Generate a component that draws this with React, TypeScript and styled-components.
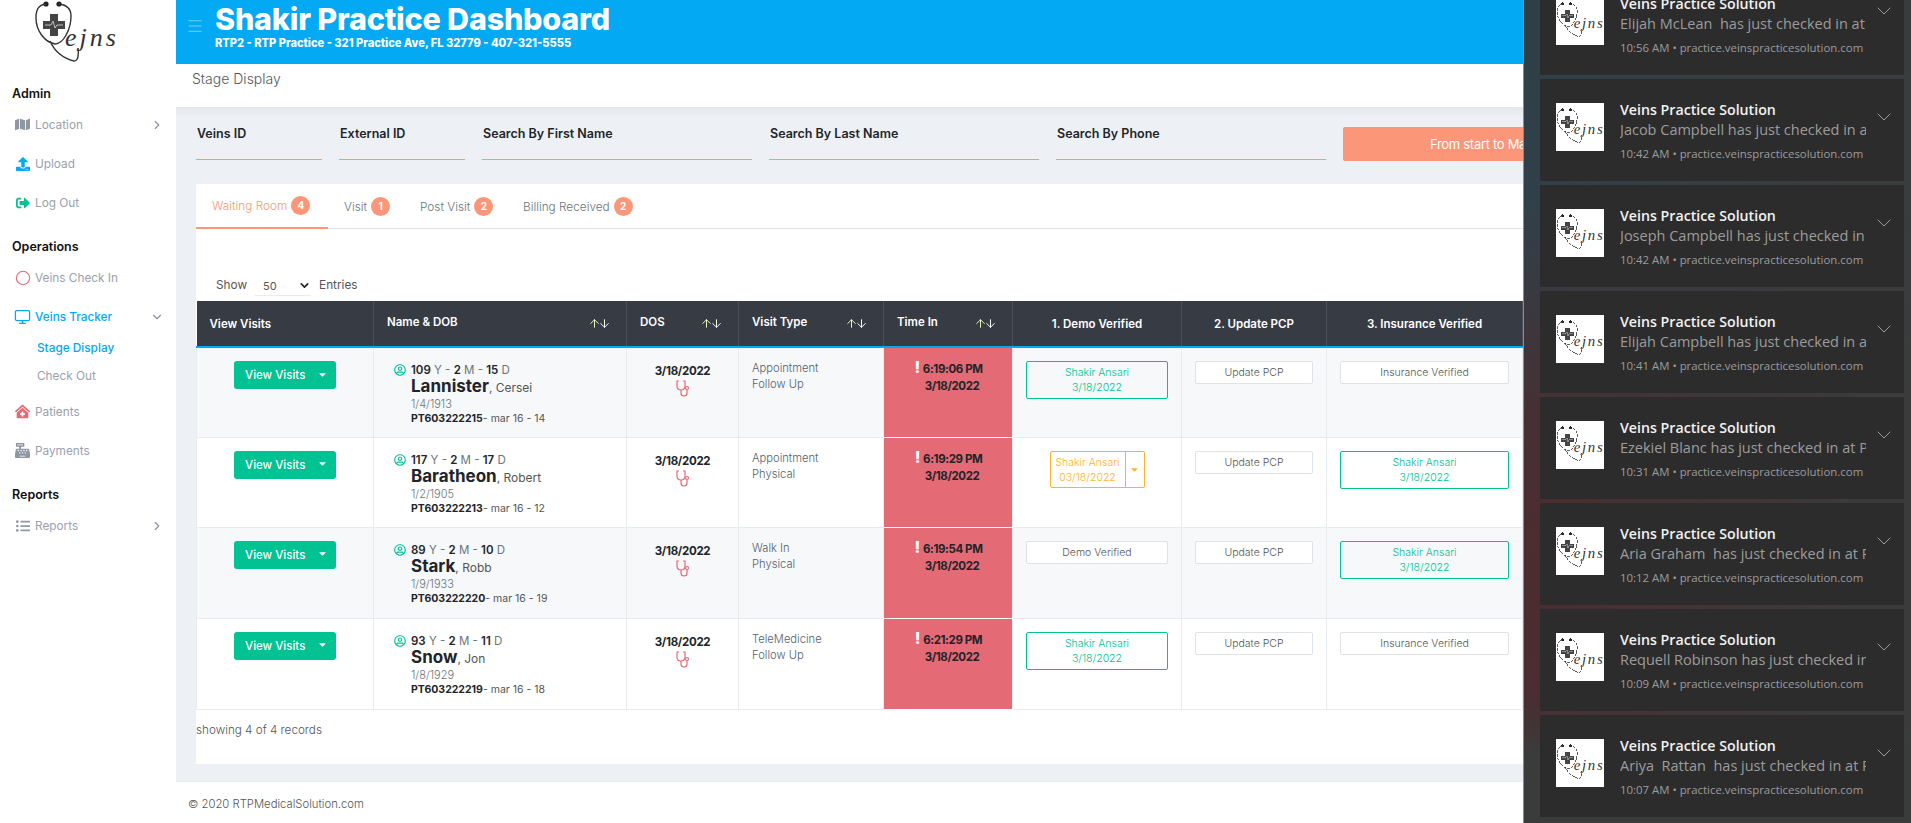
import React from "react";
import styled, { createGlobalStyle } from "styled-components";
import { ChevronDown, ChevronRight, Circle, Monitor, ArrowUp, ArrowDown, Menu } from "lucide-react";
import { FaMap, FaUpload, FaSignOutAlt, FaClinicMedical, FaCashRegister, FaListUl, FaCaretDown, FaRegUserCircle } from "react-icons/fa";

const Global = createGlobalStyle`
  html, body { margin: 0; padding: 0; height: 100%; overflow: hidden; background: #fff; }
  * { box-sizing: border-box; }
  body { font-family: Inter, "Open Sans", "Liberation Sans", sans-serif; color: #67757c; }
`;

const Page = styled.div`
  position: relative;
  display: flex;
  width: 1911px;
  height: 823px;
  overflow: hidden;
`;

/* ---------- sidebar ---------- */
const Sidebar = styled.aside`
  width: 176px;
  flex: none;
  background: #fff;
  padding-left: 12px;
`;
const LogoBlock = styled.div`
  height: 69px;
  margin-left: -12px;
`;
const SectionTitle = styled.div`
  height: 21px;
  margin: 14px 0 1px;
  line-height: 21px;
  font-size: 12.5px;
  font-weight: 600;
  color: #111;
`;
const MenuRow = styled.div<{ $active?: boolean }>`
  display: flex;
  align-items: center;
  height: 39px;
  padding-right: 12px;
  font-size: 11.8px;
  color: ${(p) => (p.$active ? "#03a9f3" : "#99a1ad")};
  font-weight: ${(p) => (p.$active ? 500 : 400)};
`;
const MenuIcon = styled.span<{ $color: string }>`
  display: flex;
  align-items: center;
  justify-content: center;
  width: 17px;
  margin: 0 4px 0 2px;
  color: ${(p) => p.$color};
`;
const MenuLabel = styled.span`
  flex: 1;
`;
const Caret = styled.span`
  display: flex;
  color: #8a919c;
`;
const SubList = styled.div`
  margin: -2px 0 2px;
`;
const SubItem = styled.div<{ $active?: boolean }>`
  height: 28px;
  line-height: 28px;
  padding-left: 25px;
  font-size: 11.8px;
  font-weight: ${(p) => (p.$active ? 500 : 400)};
  color: ${(p) => (p.$active ? "#03a9f3" : "#99a1ad")};
`;

/* ---------- main ---------- */
const Main = styled.main`
  flex: 1;
  display: flex;
  flex-direction: column;
  min-width: 0;
  background: #edf1f5;
`;
const Header = styled.header`
  height: 64px;
  flex: none;
  display: flex;
  background: #03a9f3;
  color: #fff;
  padding-left: 10px;
`;
const Burger = styled.div`
  width: 29px;
  display: flex;
  align-items: center;
  padding-bottom: 12px;
  color: #7fd0f7;
`;
const HeaderText = styled.div`
  padding-top: 3px;
`;
const HeaderTitle = styled.div`
  font-size: 30.5px;
  line-height: 32px;
  font-weight: 800;
  letter-spacing: -0.2px;
  white-space: nowrap;
`;
const HeaderSub = styled.div`
  font-size: 11.1px;
  line-height: 16px;
  font-weight: 800;
  white-space: nowrap;
`;
const TitleBand = styled.div`
  height: 43px;
  flex: none;
  background: #fff;
  padding: 6px 0 0 16px;
  font-size: 14px;
  line-height: 18px;
  font-weight: 300;
  color: #54585c;
`;
const Content = styled.div`
  flex: 1;
  padding: 0 20px;
  background: linear-gradient(#e3e7eb, #edf1f5 10px);
`;
const Filters = styled.div`
  height: 77px;
  display: grid;
  grid-template-columns: 126px 126px 270px 270px 270px 1fr;
  column-gap: 17px;
  padding-top: 20px;
`;
const Field = styled.div`
  height: 33px;
  padding-left: 1px;
  border-bottom: 1px solid #fb9678;
  font-size: 12.5px;
  line-height: 13px;
  font-weight: 600;
  color: #212529;
`;
const StartButton = styled.div`
  height: 34px;
  background: #fb9678;
  border-radius: 2px;
  padding-left: 87px;
  line-height: 34px;
  font-size: 13px;
  letter-spacing: -0.3px;
  color: #fff;
  white-space: nowrap;
`;
const Card = styled.section`
  height: 580px;
  background: #fff;
`;
const Tabs = styled.nav`
  height: 45px;
  display: flex;
  border-bottom: 1px solid #dee2e6;
`;
const Tab = styled.div<{ $active?: boolean; $width: number }>`
  width: ${(p) => p.$width}px;
  height: 45px;
  display: flex;
  align-items: center;
  padding-left: 16px;
  gap: 4px;
  font-size: 11.8px;
  color: ${(p) => (p.$active ? "#fb9678" : "#67757c")};
  border-bottom: ${(p) => (p.$active ? "2px solid #fb9678" : "none")};
  font-weight: 300;
`;
const Badge = styled.span`
  width: 19px;
  height: 19px;
  border-radius: 50%;
  background: #fb9678;
  color: #fff;
  font-size: 10px;
  font-weight: 700;
  line-height: 19px;
  text-align: center;
`;
const ShowRow = styled.div`
  height: 72px;
  display: flex;
  align-items: flex-start;
  padding: 49px 0 0 20px;
  font-size: 11.8px;
  color: #555;
`;
const ShowSelect = styled.div`
  width: 56px;
  height: 20px;
  margin: -2px 8px 0 8px;
  padding-left: 8px;
  border-bottom: 1px solid #e9ecef;
  display: flex;
  align-items: center;
  justify-content: space-between;
  font-size: 11px;
`;
const Table = styled.table`
  width: 100%;
  table-layout: fixed;
  border-collapse: collapse;
`;
const HeadRow = styled.tr`
  height: 46px;
  background: #373b44;
`;
const Th = styled.th<{ $center?: boolean }>`
  padding: ${(p) => (p.$center ? "0" : "0 0 0 13px")};
  border-right: 1px solid #4c5058;
  border-bottom: 2px solid #03a9f3;
  color: #fff;
  font-size: 11.5px;
  font-weight: 600;
  text-align: ${(p) => (p.$center ? "center" : "left")};
  white-space: nowrap;
`;
const SortHead = styled.div`
  display: flex;
  justify-content: space-between;
  align-items: center;
  padding: 0 15px 4px 0;
`;
const SortArrows = styled.span`
  display: flex;
  margin-top: 4px;
  color: #fff;
`;
const UpArrow = styled(ArrowUp)`
  color: #eaf7b8;
  margin-right: -3px;
`;
const Tr = styled.tr<{ $odd: boolean; $tall: boolean }>`
  height: ${(p) => (p.$tall ? 91 : 90)}px;
  background: ${(p) => (p.$odd ? "#f7f8fa" : "#fff")};
`;
const Td = styled.td<{ $center?: boolean }>`
  padding: 13px 13px 0;
  vertical-align: top;
  border: 1px solid #e9ecef;
  border-top: none;
  text-align: ${(p) => (p.$center ? "center" : "left")};
`;
const TimeTd = styled.td`
  padding: 12px 0 0 8px;
  vertical-align: top;
  background: #e46a76;
  border-bottom: 1px solid #fff;
  text-align: center;
  font-size: 11.5px;
  font-weight: 700;
  letter-spacing: -0.4px;
  line-height: 17px;
  color: #212529;
`;
const Bang = styled.span`
  color: #fff;
  font-size: 16px;
  font-weight: 800;
  margin-right: 3px;
  line-height: 14px;
`;
const TimeValue = styled.span`
  margin-right: 7px;
`;
const EdgeTd = styled.td`
  background: #e46a76;
`;
const VisitsButton = styled.div`
  width: 102px;
  height: 28px;
  margin: 0 auto;
  padding: 0 8px 0 11px;
  display: flex;
  align-items: center;
  justify-content: space-between;
  background: #00c292;
  border-radius: 3px;
  color: #fff;
  font-size: 11.5px;
  font-weight: 500;
`;
const ButtonCaret = styled.span`
  display: flex;
  margin-top: -2px;
`;
const NameCell = styled.td`
  padding: 15px 0 0 20px;
  vertical-align: top;
  border: 1px solid #e9ecef;
  border-top: none;
`;
const NameWrap = styled.div`
  display: flex;
  gap: 6px;
`;
const PersonIcon = styled.span`
  display: flex;
  height: 14px;
  align-items: center;
  color: #00c292;
`;
const NameLines = styled.div`
  flex: 1;
`;
const Age = styled.div`
  font-size: 11.5px;
  line-height: 14px;
  color: #67757c;
  margin-left: -1px;
  b { font-weight: 600; color: #212529; }
`;
const NameLine = styled.div`
  font-size: 12px;
  line-height: 19px;
  color: #555;
  margin-left: -1px;
  b { font-size: 17px; font-weight: 700; color: #212529; }
`;
const Dob = styled.div`
  font-size: 11px;
  line-height: 14px;
  color: #67757c;
  margin-left: -1px;
  font-weight: 300;
`;
const PatientId = styled.div`
  font-size: 10.5px;
  line-height: 15px;
  color: #555;
  margin-left: -1px;
  white-space: nowrap;
  b { font-weight: 700; color: #212529; }
`;
const DosDate = styled.div`
  margin-top: 2px;
  font-size: 11.5px;
  letter-spacing: -0.3px;
  line-height: 16px;
  font-weight: 700;
  color: #212529;
`;
const DosIcon = styled.svg`
  display: block;
  margin: 1px auto 0;
  width: 14px;
  height: 17px;
  fill: none;
  stroke: #e46a76;
  stroke-width: 1.2;
`;
const VisitType = styled.div`
  font-size: 11.2px;
  line-height: 16px;
  font-weight: 300;
  color: #54616a;
  white-space: nowrap;
  position: relative;
  top: -1px;
`;
const ActionButton = styled.div<{ $done?: boolean }>`
  min-height: ${(p) => (p.$done ? 38 : 23)}px;
  padding: ${(p) => (p.$done ? "3px 0" : "0")};
  border: ${(p) => (p.$done ? "1.5px solid #00c292" : "1px solid #dfe2e6")};
  border-radius: 2px;
  background: ${(p) => (p.$done ? "transparent" : "#fff")};
  color: ${(p) => (p.$done ? "#00c292" : "#555")};
  font-size: 10.5px;
  line-height: ${(p) => (p.$done ? 15 : 21)}px;
  text-align: center;
  font-weight: 300;
`;
const PendingSplit = styled.div`
  width: 95px;
  height: 37px;
  margin: 0 auto;
  display: flex;
  border: 1px solid #ffb22b;
  border-radius: 2px;
  color: #ffb22b;
  font-size: 10.5px;
  line-height: 15px;
  text-align: center;
  font-weight: 300;
`;
const PendingText = styled.div`
  flex: 1;
  padding-top: 3px;
  border-right: 1px solid #ffb22b;
  white-space: nowrap;
`;
const PendingCaret = styled.div`
  width: 18px;
  display: flex;
  align-items: center;
  justify-content: center;
`;
const Showing = styled.div`
  padding-top: 13px;
  font-size: 11.7px;
  font-weight: 300;
  color: #555;
`;
const Footer = styled.footer`
  height: 42px;
  flex: none;
  background: #fff;
  border-top: 1px solid #e9ecef;
  padding: 14px 0 0 12px;
  font-size: 11.3px;
  line-height: 16px;
  font-weight: 300;
  color: #555;
`;

/* ---------- notification panel ---------- */
const Panel = styled.aside`
  position: absolute;
  top: 0;
  right: 0;
  bottom: 0;
  width: 388px;
  padding-left: 16px;
  overflow: hidden;
  border-left: 1px solid #8a8d8f;
  background:
    linear-gradient(90deg, rgba(58, 60, 60, 0) 0%, rgba(58, 60, 60, 0.9) 85%),
    linear-gradient(#2e3f47 0%, #30404a 25%, #463034 50%, #4c2c2f 65%, #4a2d30 85%, #3a3c3c 92%);
`;
const NoteList = styled.div`
  margin-top: -27px;
  width: 364px;
  display: flex;
  flex-direction: column;
  gap: 4px;
`;
const Note = styled.article`
  position: relative;
  height: 102px;
  flex: none;
  display: flex;
  gap: 16px;
  padding: 24px 0 0 16px;
  background: #2c2c2c;
  font-family: "Open Sans", "Noto Sans", sans-serif;
`;
const NoteImage = styled.div`
  width: 48px;
  height: 48px;
  flex: none;
  background: #fff;
  overflow: hidden;
`;
const NoteText = styled.div`
  width: 246px;
  overflow: hidden;
  white-space: pre;
  margin-top: -3px;
`;
const NoteTitle = styled.div`
  font-size: 14.2px;
  line-height: 20px;
  font-weight: 600;
  color: #f2f2f2;
`;
const NoteBody = styled.div`
  font-size: 14.5px;
  line-height: 20px;
  color: #9c9c9c;
`;
const NoteMeta = styled.div`
  margin-top: 5px;
  font-size: 11.4px;
  line-height: 18px;
  color: #9c9c9c;
`;
const NoteChevron = styled.span`
  position: absolute;
  top: 26px;
  right: 8px;
  display: flex;
  color: #9a9a9a;
`;

const Logo = ({ small }: { small?: boolean }) => (
  <svg
    width={small ? 48 : 120}
    height={small ? 48 : 64}
    viewBox={small ? "34 -8 84 84" : "0 0 120 64"}
    shapeRendering={small ? "crispEdges" : undefined}
    role="img"
  >
    <circle cx="46" cy="4" r="2.6" fill="#222" />
    <circle cx="59" cy="4" r="2.6" fill="#222" />
    <path
      d="M46 4C38 5 36 10 36 18C36 30 44 42 55 44C63 44 71 30 71 16C71 10 68 5 59 4M50 41C54 50 62 58 74 61C78 61 79 55 78 48"
      fill="none"
      stroke="#333"
      strokeWidth="1.4"
      strokeDasharray={small ? "5 1.5" : undefined}
    />
    <path d="M50 14h8v7h7v8h-7v7h-8v-7h-7v-8h7z" fill="#444" />
    <path d="M45 25h6l2-4 2 7 2-3h6" fill="none" stroke="#ddd" strokeWidth="0.8" />
    <text x="65" y="46" fontFamily="'Liberation Serif', serif" fontStyle="italic" fontSize="26" letterSpacing="3" fill="#333">
      ejns
    </text>
  </svg>
);

const Sort = () => (
  <SortArrows>
    <UpArrow size={13} strokeWidth={1.8} />
    <ArrowDown size={13} strokeWidth={1.8} />
  </SortArrows>
);

const ScopeIcon = () => (
  <DosIcon viewBox="0 0 14 17">
    <path d="M3 1H1V6C1 9 3 10 5 10C7 10 9 9 9 6V1H7" />
    <path d="M5 10V13C5 15 6 16 8 16C10 16 11 15 11 13V9.5" />
    <circle cx="11" cy="8" r="1.5" />
  </DosIcon>
);

type RowData = {
  y: string; m: string; d: string; last: string; first: string; dob: string; id: string; tag: string;
  t1: string; t2: string; time: string;
  demo: "done" | "pending" | "plain"; ins: boolean;
};
const rows: RowData[] = [
  { y: "109", m: "2", d: "15", last: "Lannister", first: "Cersei", dob: "1/4/1913", id: "PT603222215", tag: "mar 16 - 14", t1: "Appointment", t2: "Follow Up", time: "6:19:06 PM", demo: "done", ins: false },
  { y: "117", m: "2", d: "17", last: "Baratheon", first: "Robert", dob: "1/2/1905", id: "PT603222213", tag: "mar 16 - 12", t1: "Appointment", t2: "Physical", time: "6:19:29 PM", demo: "pending", ins: true },
  { y: "89", m: "2", d: "10", last: "Stark", first: "Robb", dob: "1/9/1933", id: "PT603222220", tag: "mar 16 - 19", t1: "Walk In", t2: "Physical", time: "6:19:54 PM", demo: "plain", ins: true },
  { y: "93", m: "2", d: "11", last: "Snow", first: "Jon", dob: "1/8/1929", id: "PT603222219", tag: "mar 16 - 18", t1: "TeleMedicine", t2: "Follow Up", time: "6:21:29 PM", demo: "done", ins: false },
];

const notes = [
  ["Elijah McLean  has just checked in at Practice", "10:56 AM"],
  ["Jacob Campbell has just checked in at Practice", "10:42 AM"],
  ["Joseph Campbell has just checked in at Practice", "10:42 AM"],
  ["Elijah Campbell has just checked in at Practice", "10:41 AM"],
  ["Ezekiel Blanc has just checked in at Practice", "10:31 AM"],
  ["Aria Graham  has just checked in at Practice", "10:12 AM"],
  ["Requell Robinson has just checked in at Practice", "10:09 AM"],
  ["Ariya  Rattan  has just checked in at Practice", "10:07 AM"],
];

const Verified = () => (
  <ActionButton $done>
    Shakir Ansari
    <br />
    3/18/2022
  </ActionButton>
);

export default function App() {
  return (
    <Page>
      <Global />
      <Sidebar>
        <LogoBlock>
          <Logo />
        </LogoBlock>
        <SectionTitle>Admin</SectionTitle>
        <MenuRow>
          <MenuIcon $color="#8f97a3"><FaMap size={15} /></MenuIcon>
          <MenuLabel>Location</MenuLabel>
          <Caret><ChevronRight size={14} /></Caret>
        </MenuRow>
        <MenuRow>
          <MenuIcon $color="#03a9f3"><FaUpload size={14} /></MenuIcon>
          <MenuLabel>Upload</MenuLabel>
        </MenuRow>
        <MenuRow>
          <MenuIcon $color="#00c292"><FaSignOutAlt size={14} /></MenuIcon>
          <MenuLabel>Log Out</MenuLabel>
        </MenuRow>
        <SectionTitle>Operations</SectionTitle>
        <MenuRow>
          <MenuIcon $color="#e46a76"><Circle size={16} strokeWidth={1.6} /></MenuIcon>
          <MenuLabel>Veins Check In</MenuLabel>
        </MenuRow>
        <MenuRow $active>
          <MenuIcon $color="#03a9f3"><Monitor size={20} strokeWidth={1.8} /></MenuIcon>
          <MenuLabel>Veins Tracker</MenuLabel>
          <Caret><ChevronDown size={14} /></Caret>
        </MenuRow>
        <SubList>
          <SubItem $active>Stage Display</SubItem>
          <SubItem>Check Out</SubItem>
        </SubList>
        <MenuRow>
          <MenuIcon $color="#e46a76"><FaClinicMedical size={15} /></MenuIcon>
          <MenuLabel>Patients</MenuLabel>
        </MenuRow>
        <MenuRow>
          <MenuIcon $color="#8f97a3"><FaCashRegister size={15} /></MenuIcon>
          <MenuLabel>Payments</MenuLabel>
        </MenuRow>
        <SectionTitle>Reports</SectionTitle>
        <MenuRow>
          <MenuIcon $color="#8f97a3"><FaListUl size={14} /></MenuIcon>
          <MenuLabel>Reports</MenuLabel>
          <Caret><ChevronRight size={14} /></Caret>
        </MenuRow>
      </Sidebar>

      <Main>
        <Header>
          <Burger><Menu size={18} strokeWidth={1.4} /></Burger>
          <HeaderText>
            <HeaderTitle>Shakir Practice Dashboard</HeaderTitle>
            <HeaderSub>RTP2 - RTP Practice - 321 Practice Ave, FL 32779 - 407-321-5555</HeaderSub>
          </HeaderText>
        </Header>
        <TitleBand>Stage Display</TitleBand>
        <Content>
          <Filters>
            <Field>Veins ID</Field>
            <Field>External ID</Field>
            <Field>Search By First Name</Field>
            <Field>Search By Last Name</Field>
            <Field>Search By Phone</Field>
            <StartButton>From start to Ma</StartButton>
          </Filters>
          <Card>
            <Tabs>
              <Tab $active $width={132}>Waiting Room <Badge>4</Badge></Tab>
              <Tab $width={76}>Visit <Badge>1</Badge></Tab>
              <Tab $width={103}>Post Visit <Badge>2</Badge></Tab>
              <Tab $width={160}>Billing Received <Badge>2</Badge></Tab>
            </Tabs>
            <ShowRow>
              Show
              <ShowSelect>50 <ChevronDown size={13} strokeWidth={3} color="#222" /></ShowSelect>
              Entries
            </ShowRow>
            <Table>
              <colgroup>
                <col width={177} />
                <col width={253} />
                <col width={112} />
                <col width={145} />
                <col width={129} />
                <col width={169} />
                <col width={145} />
                <col width={196} />
                <col />
              </colgroup>
              <thead>
                <HeadRow>
                  <Th>View Visits</Th>
                  <Th><SortHead>Name &amp; DOB<Sort /></SortHead></Th>
                  <Th><SortHead>DOS<Sort /></SortHead></Th>
                  <Th><SortHead>Visit Type<Sort /></SortHead></Th>
                  <Th><SortHead>Time In<Sort /></SortHead></Th>
                  <Th $center>1. Demo Verified</Th>
                  <Th $center>2. Update PCP</Th>
                  <Th $center>3. Insurance Verified</Th>
                  <Th />
                </HeadRow>
              </thead>
              <tbody>
                {rows.map((r, i) => (
                  <Tr key={r.id} $odd={i % 2 === 0} $tall={i > 1}>
                    <Td>
                      <VisitsButton>View Visits <ButtonCaret><FaCaretDown size={11} /></ButtonCaret></VisitsButton>
                    </Td>
                    <NameCell>
                      <NameWrap>
                        <PersonIcon><FaRegUserCircle size={12} /></PersonIcon>
                        <NameLines>
                          <Age><b>{r.y}</b> Y - <b>{r.m}</b> M - <b>{r.d}</b> D</Age>
                          <NameLine><b>{r.last}</b>, {r.first}</NameLine>
                          <Dob>{r.dob}</Dob>
                          <PatientId><b>{r.id}</b>- {r.tag}</PatientId>
                        </NameLines>
                      </NameWrap>
                    </NameCell>
                    <Td $center>
                      <DosDate>3/18/2022</DosDate>
                      <ScopeIcon />
                    </Td>
                    <Td>
                      <VisitType>{r.t1}</VisitType>
                      <VisitType>{r.t2}</VisitType>
                    </Td>
                    <TimeTd>
                      <Bang>!</Bang><TimeValue>{r.time}</TimeValue>
                      <br />
                      3/18/2022
                    </TimeTd>
                    <Td $center>
                      {r.demo === "done" && <Verified />}
                      {r.demo === "plain" && <ActionButton>Demo Verified</ActionButton>}
                      {r.demo === "pending" && (
                        <PendingSplit>
                          <PendingText>Shakir Ansari<br />03/18/2022</PendingText>
                          <PendingCaret><FaCaretDown size={11} /></PendingCaret>
                        </PendingSplit>
                      )}
                    </Td>
                    <Td $center><ActionButton>Update PCP</ActionButton></Td>
                    <Td $center>{r.ins ? <Verified /> : <ActionButton>Insurance Verified</ActionButton>}</Td>
                    <EdgeTd />
                  </Tr>
                ))}
              </tbody>
            </Table>
            <Showing>showing 4 of 4 records</Showing>
          </Card>
        </Content>
        <Footer>© 2020 RTPMedicalSolution.com</Footer>
      </Main>

      <Panel>
        <NoteList>
          {notes.map(([body, time]) => (
            <Note key={body}>
              <NoteImage><Logo small /></NoteImage>
              <NoteText>
                <NoteTitle>Veins Practice Solution</NoteTitle>
                <NoteBody>{body}</NoteBody>
                <NoteMeta>{time} • practice.veinspracticesolution.com</NoteMeta>
              </NoteText>
              <NoteChevron><ChevronDown size={24} strokeWidth={1} /></NoteChevron>
            </Note>
          ))}
        </NoteList>
      </Panel>
    </Page>
  );
}
